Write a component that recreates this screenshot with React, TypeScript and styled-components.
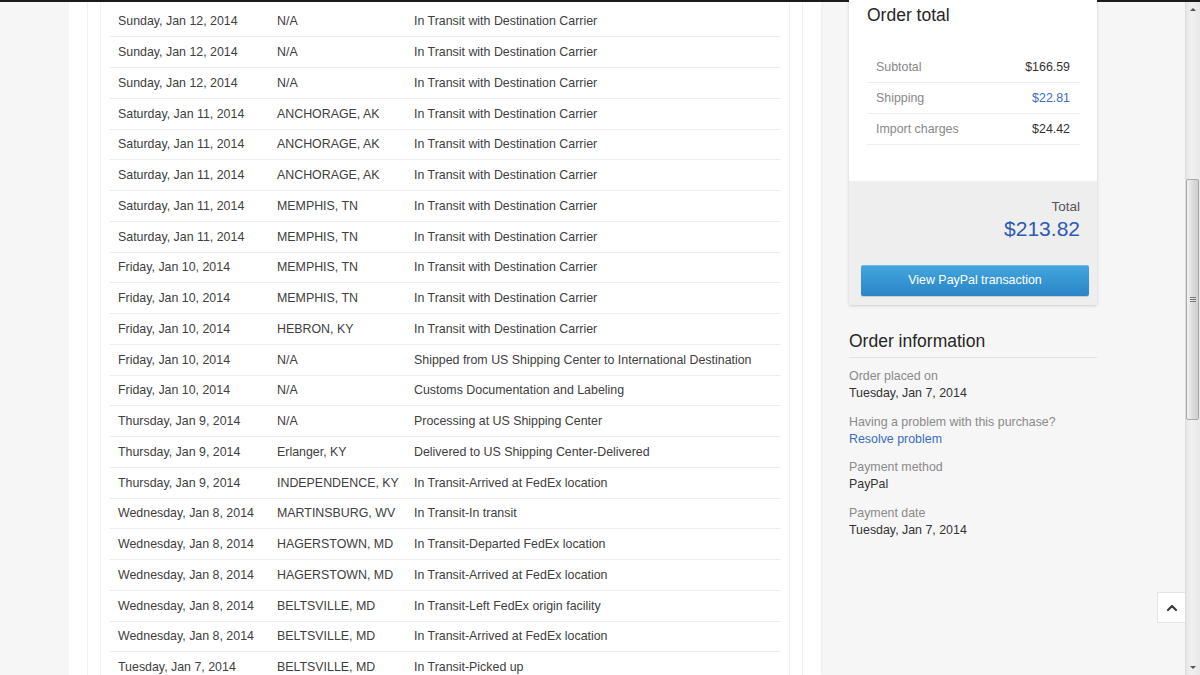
import React from "react";
import styled, { createGlobalStyle } from "styled-components";
import { ChevronUp } from "lucide-react";

type TrackingEvent = {
    date: string;
    location: string;
    status: string;
};

const DEST = "In Transit with Destination Carrier";

const events: TrackingEvent[] = [
    { date: "Sunday, Jan 12, 2014", location: "N/A", status: DEST },
    { date: "Sunday, Jan 12, 2014", location: "N/A", status: DEST },
    { date: "Sunday, Jan 12, 2014", location: "N/A", status: DEST },
    { date: "Saturday, Jan 11, 2014", location: "ANCHORAGE, AK", status: DEST },
    { date: "Saturday, Jan 11, 2014", location: "ANCHORAGE, AK", status: DEST },
    { date: "Saturday, Jan 11, 2014", location: "ANCHORAGE, AK", status: DEST },
    { date: "Saturday, Jan 11, 2014", location: "MEMPHIS, TN", status: DEST },
    { date: "Saturday, Jan 11, 2014", location: "MEMPHIS, TN", status: DEST },
    { date: "Friday, Jan 10, 2014", location: "MEMPHIS, TN", status: DEST },
    { date: "Friday, Jan 10, 2014", location: "MEMPHIS, TN", status: DEST },
    { date: "Friday, Jan 10, 2014", location: "HEBRON, KY", status: DEST },
    {
        date: "Friday, Jan 10, 2014",
        location: "N/A",
        status: "Shipped from US Shipping Center to International Destination",
    },
    { date: "Friday, Jan 10, 2014", location: "N/A", status: "Customs Documentation and Labeling" },
    { date: "Thursday, Jan 9, 2014", location: "N/A", status: "Processing at US Shipping Center" },
    {
        date: "Thursday, Jan 9, 2014",
        location: "Erlanger, KY",
        status: "Delivered to US Shipping Center-Delivered",
    },
    {
        date: "Thursday, Jan 9, 2014",
        location: "INDEPENDENCE, KY",
        status: "In Transit-Arrived at FedEx location",
    },
    { date: "Wednesday, Jan 8, 2014", location: "MARTINSBURG, WV", status: "In Transit-In transit" },
    {
        date: "Wednesday, Jan 8, 2014",
        location: "HAGERSTOWN, MD",
        status: "In Transit-Departed FedEx location",
    },
    {
        date: "Wednesday, Jan 8, 2014",
        location: "HAGERSTOWN, MD",
        status: "In Transit-Arrived at FedEx location",
    },
    {
        date: "Wednesday, Jan 8, 2014",
        location: "BELTSVILLE, MD",
        status: "In Transit-Left FedEx origin facility",
    },
    {
        date: "Wednesday, Jan 8, 2014",
        location: "BELTSVILLE, MD",
        status: "In Transit-Arrived at FedEx location",
    },
    { date: "Tuesday, Jan 7, 2014", location: "BELTSVILLE, MD", status: "In Transit-Picked up" },
];

const summary = [
    { label: "Subtotal", value: "$166.59", link: false },
    { label: "Shipping", value: "$22.81", link: true },
    { label: "Import charges", value: "$24.42", link: false },
];

const orderInfo = [
    { label: "Order placed on", value: "Tuesday, Jan 7, 2014", link: false },
    { label: "Having a problem with this purchase?", value: "Resolve problem", link: true },
    { label: "Payment method", value: "PayPal", link: false },
    { label: "Payment date", value: "Tuesday, Jan 7, 2014", link: false },
];

const App = () => {
    return (
        <>
            <GlobalStyle />
            <StyledWindow>
                <StyledTopBar />
                <StyledBody>
                    <StyledPage>
                        <StyledGutter />
                        <StyledMain>
                            <StyledOuterBox>
                                <StyledInnerBox>
                                    <StyledTable>
                                        {events.map((ev, key) => (
                                            <StyledRow key={key}>
                                                <StyledCell width={159}>{ev.date}</StyledCell>
                                                <StyledCell width={137}>{ev.location}</StyledCell>
                                                <StyledCell>{ev.status}</StyledCell>
                                            </StyledRow>
                                        ))}
                                    </StyledTable>
                                </StyledInnerBox>
                            </StyledOuterBox>
                        </StyledMain>
                        <StyledSidebar>
                            <StyledCard>
                                <StyledCardTop>
                                    <StyledHeading>Order total</StyledHeading>
                                    <StyledSummary>
                                        {summary.map((row) => (
                                            <StyledSummaryRow key={row.label}>
                                                <span>{row.label}</span>
                                                <StyledSummaryValue link={row.link}>
                                                    {row.value}
                                                </StyledSummaryValue>
                                            </StyledSummaryRow>
                                        ))}
                                    </StyledSummary>
                                </StyledCardTop>
                                <StyledCardBottom>
                                    <StyledTotalLabel>Total</StyledTotalLabel>
                                    <StyledTotalAmount>$213.82</StyledTotalAmount>
                                    <StyledButton>View PayPal transaction</StyledButton>
                                </StyledCardBottom>
                            </StyledCard>
                            <StyledInfo>
                                <StyledInfoHeading>Order information</StyledInfoHeading>
                                <StyledInfoList>
                                    {orderInfo.map((item) => (
                                        <StyledInfoItem key={item.label}>
                                            <StyledInfoLabel>{item.label}</StyledInfoLabel>
                                            <StyledInfoValue link={item.link}>
                                                {item.value}
                                            </StyledInfoValue>
                                        </StyledInfoItem>
                                    ))}
                                </StyledInfoList>
                            </StyledInfo>
                        </StyledSidebar>
                        <StyledBackToTop>
                            <ChevronUp size={16} strokeWidth={3.2} color="#3a3a3a" />
                        </StyledBackToTop>
                    </StyledPage>
                    <StyledScrollbar>
                        <StyledArrow up />
                        <StyledThumb>
                            <StyledGrip />
                        </StyledThumb>
                        <StyledArrow />
                    </StyledScrollbar>
                </StyledBody>
            </StyledWindow>
        </>
    );
};
export default App;

const GlobalStyle = createGlobalStyle({
    "html, body": {
        margin: 0,
        padding: 0,
        overflow: "hidden",
    },
    body: {
        fontFamily: '"Liberation Sans", Arial, sans-serif',
        fontSize: "12.4px",
        color: "#333",
    },
    "*": {
        boxSizing: "border-box",
    },
});

const StyledWindow = styled.div({
    width: 1200,
    height: 675,
    display: "flex",
    flexDirection: "column",
    overflow: "hidden",
    background: "#f6f6f6",
});

const StyledTopBar = styled.div({
    height: 2,
    flexShrink: 0,
    background: "#1c1c1c",
});

const StyledBody = styled.div({
    flex: 1,
    display: "flex",
    minHeight: 0,
});

const StyledPage = styled.div({
    flex: 1,
    display: "flex",
    position: "relative",
    minWidth: 0,
});

const StyledGutter = styled.div({
    width: 69,
    flexShrink: 0,
});

const StyledMain = styled.main({
    width: 752,
    flexShrink: 0,
    background: "#fff",
    padding: "0 18px",
    boxShadow: "1px 0 2px rgba(0,0,0,0.04)",
});

const StyledOuterBox = styled.div({
    height: "100%",
    borderLeft: "1px solid #f0f0f0",
    borderRight: "1px solid #f0f0f0",
    padding: "0 12px",
});

const StyledInnerBox = styled.div({
    height: "100%",
    borderLeft: "1px solid #f2f2f2",
    borderRight: "1px solid #f2f2f2",
    padding: "4.5px 9px 0 9px",
});

const StyledTable = styled.div({
    display: "flex",
    flexDirection: "column",
});

const StyledRow = styled.div({
    height: 30.76,
    flexShrink: 0,
    display: "flex",
    alignItems: "center",
    borderBottom: "1px solid #ececec",
    color: "#404040",
});

const StyledCell = styled.div<{ width?: number }>(({ width }) => ({
    width: width ?? "auto",
    flex: width ? "none" : 1,
    paddingLeft: 8,
    whiteSpace: "nowrap",
}));

const StyledSidebar = styled.aside({
    width: 364,
    flexShrink: 0,
    padding: "0 88px 0 28px",
});

const StyledCard = styled.section({
    marginTop: -14,
    background: "#fff",
    boxShadow: "0 1px 3px rgba(0,0,0,0.16)",
});

const StyledCardTop = styled.div({
    padding: "16px 17px 36px 18px",
});

const StyledHeading = styled.h2({
    margin: 0,
    fontSize: "17.5px",
    lineHeight: "22px",
    fontWeight: "normal",
    color: "#262626",
});

const StyledSummary = styled.div({
    marginTop: 25.5,
});

const StyledSummaryRow = styled.div({
    height: 31,
    display: "flex",
    alignItems: "center",
    justifyContent: "space-between",
    padding: "0 10px 0 9px",
    borderBottom: "1px solid #efefef",
    color: "#888",
});

const StyledSummaryValue = styled.span<{ link: boolean }>(({ link }) => ({
    color: link ? "#3b6cc4" : "#333",
}));

const StyledCardBottom = styled.div({
    background: "#eeeeee",
    padding: "17px 8px 9px 12px",
    display: "flex",
    flexDirection: "column",
    alignItems: "stretch",
});

const StyledTotalLabel = styled.div({
    textAlign: "right",
    paddingRight: 9,
    fontSize: "13.5px",
    lineHeight: "18px",
    color: "#555",
});

const StyledTotalAmount = styled.div({
    textAlign: "right",
    paddingRight: 9,
    fontSize: "21px",
    lineHeight: "26px",
    color: "#2c5ab4",
});

const StyledButton = styled.button({
    marginTop: 23,
    height: 31,
    border: "none",
    borderRadius: 2,
    background: "linear-gradient(to bottom, #44a6de 0%, #2a85c6 100%)",
    boxShadow: "inset 0 1px 0 rgba(255,255,255,0.25), 0 1px 1px rgba(0,0,0,0.15)",
    color: "#fff",
    fontFamily: "inherit",
    fontSize: "12.4px",
    cursor: "pointer",
});

const StyledInfo = styled.section({
    marginTop: 25,
});

const StyledInfoHeading = styled.h2({
    margin: 0,
    paddingBottom: 5,
    borderBottom: "1px solid #e2e2e2",
    fontSize: "17.5px",
    lineHeight: "22px",
    fontWeight: "normal",
    color: "#262626",
});

const StyledInfoList = styled.dl({
    margin: "10.5px 0 0",
    display: "flex",
    flexDirection: "column",
    gap: 11.7,
});

const StyledInfoItem = styled.div({
    display: "flex",
    flexDirection: "column",
});

const StyledInfoLabel = styled.dt({
    lineHeight: "17px",
    color: "#8a8a8a",
});

const StyledInfoValue = styled.dd<{ link: boolean }>(({ link }) => ({
    margin: 0,
    lineHeight: "17px",
    color: link ? "#3b6cc4" : "#333",
}));

const StyledBackToTop = styled.button({
    position: "absolute",
    left: 1157,
    top: 590,
    width: 28,
    height: 31,
    padding: 0,
    display: "flex",
    alignItems: "center",
    justifyContent: "center",
    background: "#fff",
    border: "1px solid #e4e4e4",
    borderRight: "none",
});

const StyledScrollbar = styled.div({
    width: 15,
    flexShrink: 0,
    display: "flex",
    flexDirection: "column",
    alignItems: "center",
    justifyContent: "space-between",
    background: "linear-gradient(to right, #e6e6e6, #f0f0f0 40%, #e8e8e8)",
    borderLeft: "1px solid #dcdcdc",
    position: "relative",
});

const StyledArrow = styled.div<{ up?: boolean }>(({ up }) => ({
    width: 0,
    height: 0,
    margin: up ? "6px 0 0" : "0 0 6px",
    borderLeft: "3px solid transparent",
    borderRight: "3px solid transparent",
    [up ? "borderBottom" : "borderTop"]: "3px solid #555",
}));

const StyledThumb = styled.div({
    position: "absolute",
    top: 177,
    left: 0,
    width: 13,
    height: 241,
    border: "1px solid #a9a9a9",
    borderRadius: 2,
    background: "linear-gradient(to right, #f2f2f2, #dadada 60%, #cfcfcf)",
    display: "flex",
    alignItems: "center",
    justifyContent: "center",
});

const StyledGrip = styled.div({
    width: 6,
    height: 5,
    borderTop: "1px solid #777",
    borderBottom: "1px solid #777",
    background: "linear-gradient(to bottom, transparent 1px, #777 1px, #777 2px, transparent 2px)",
});
